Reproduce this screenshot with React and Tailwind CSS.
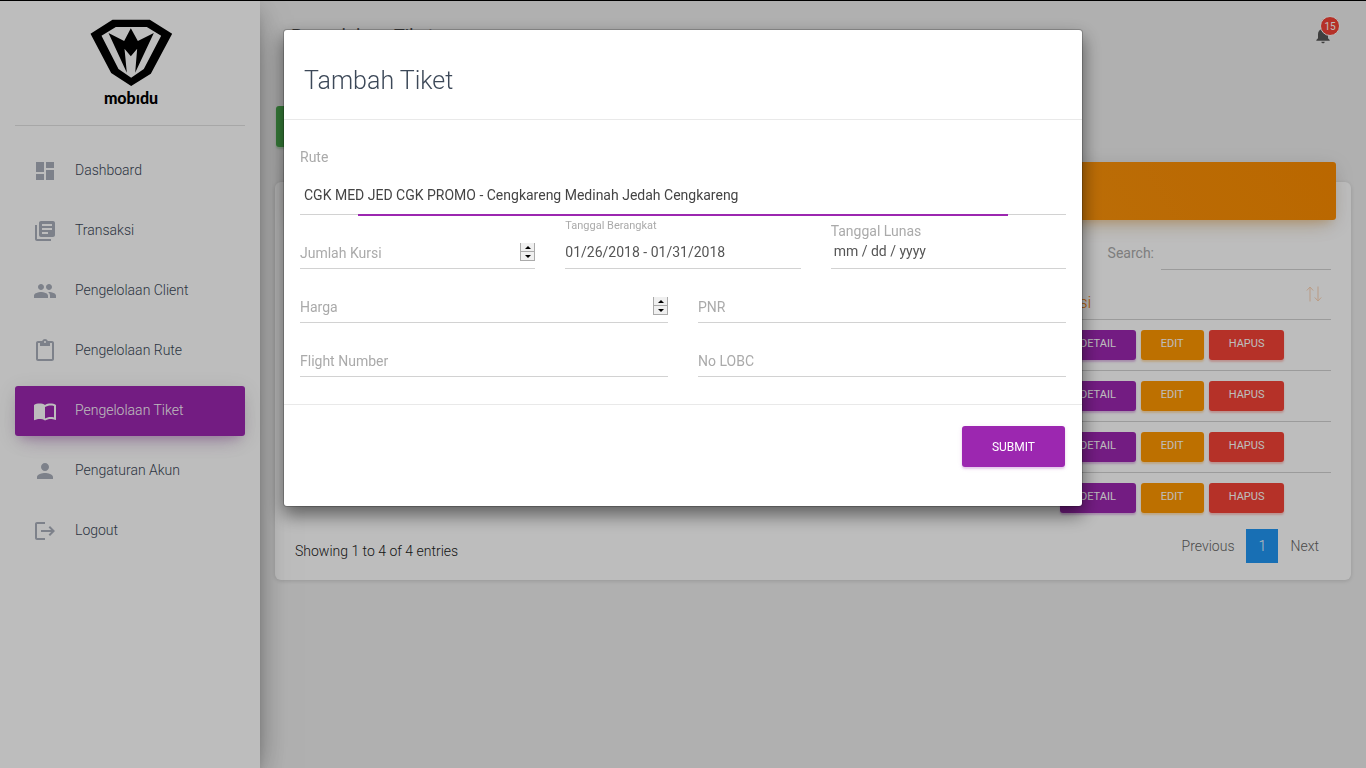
import React from "react";
import {
  MdDashboard,
  MdLibraryBooks,
  MdPeople,
  MdContentPaste,
  MdImportContacts,
  MdPerson,
  MdLogout,
  MdNotifications,
} from "react-icons/md";

const NAV = [
  { label: "Dashboard", Icon: MdDashboard },
  { label: "Transaksi", Icon: MdLibraryBooks },
  { label: "Pengelolaan Client", Icon: MdPeople },
  { label: "Pengelolaan Rute", Icon: MdContentPaste },
  { label: "Pengelolaan Tiket", Icon: MdImportContacts, active: true },
  { label: "Pengaturan Akun", Icon: MdPerson },
  { label: "Logout", Icon: MdLogout },
];

const ROWS = [1, 2, 3, 4];

function Logo() {
  return (
    <div className="flex flex-col items-center pt-[18px] pl-0.5">
      <svg viewBox="270 56 248 204" className="h-[68px] w-[83px]" aria-hidden="true">
        <path
          fillRule="evenodd"
          d="M337 58H449L516 100L452 220L393 257L333 218L271 100ZM347 80L304 106L355 206L393 232L431 206L483 106L440 80Z"
        />
        <path d="M325 98L372 122L392 84L413 122L461 98L405 217L411 145L392 168L373 145L380 217Z" />
      </svg>
      <span className="pt-px font-['Lato',sans-serif] text-base leading-5 font-black text-black">mobıdu</span>
    </div>
  );
}

function Sidebar() {
  return (
    <aside className="z-10 w-[260px] shrink-0 bg-white px-[15px] shadow-[0_16px_38px_-12px_rgba(0,0,0,0.56),0_4px_25px_0_rgba(0,0,0,0.12),0_8px_10px_-5px_rgba(0,0,0,0.2)]">
      <div className="h-[125px] border-b border-[#e2e2e2]">
        <Logo />
      </div>
      <nav className="mt-5 flex flex-col gap-[10px]">
        {NAV.map(({ label, Icon, active }) => (
          <a
            key={label}
            href="#"
            className={
              active
                ? "flex h-[50px] items-center gap-[18px] rounded-[3px] bg-[#9c27b0] px-[18px] text-sm font-light text-white shadow-[0_12px_20px_-10px_rgba(156,39,176,0.28),0_4px_20px_0_rgba(0,0,0,0.12),0_7px_8px_-5px_rgba(156,39,176,0.2)]"
                : "flex h-[50px] items-center gap-[18px] rounded-[3px] px-[18px] text-sm font-light text-[#3c4858]"
            }
          >
            <Icon className={active ? "size-6 text-white" : "size-6 text-[#a9afbb]"} />
            <span className="pb-0.5">{label}</span>
          </a>
        ))}
      </nav>
    </aside>
  );
}

function SortIcon() {
  return (
    <svg viewBox="0 0 16 16" className="size-4 fill-none stroke-[#f7852f] opacity-35" aria-hidden="true">
      <path d="M4 15.500V1.500M.8 4.500L4 1L7.200 4.500M12 .5V14.500M8.800 11.500L12 15L15.200 11.500" />
    </svg>
  );
}

const SMALL = "h-[30px] rounded-[3px] px-5 pb-0.5 text-[11px] leading-4 font-normal text-white uppercase ";

function TicketCard() {
  return (
    <section className="flow-root rounded-md bg-white px-5 pb-[17px] shadow-[0_1px_4px_0_rgba(0,0,0,0.14)]">
      <div className="-mx-[5px] -mt-5 h-[58px] rounded-[3px] bg-[linear-gradient(60deg,#ffa726,#fb8c00)] shadow-[0_12px_20px_-10px_rgba(255,152,0,0.28),0_4px_20px_0_rgba(0,0,0,0.12),0_7px_8px_-5px_rgba(255,152,0,0.2)]" />
      <div className="mt-4 flex h-[34px] items-stretch justify-end gap-[7px]">
        <label htmlFor="search" className="pt-[7px] text-sm text-[#aaa]">
          Search:
        </label>
        <input id="search" type="search" className="w-[170px] border-b border-[#d2d2d2] bg-transparent text-sm outline-none" />
      </div>
      <table className="w-full table-fixed text-left text-sm font-light">
        <thead>
          <tr className="h-[49px] border-b border-[#d2d2d2] text-[17px] text-[#f57c00]">
            <td />
            <th className="w-[276px] pt-4 pr-[9px] pb-0 pl-[5px] align-top font-light">
              <div className="flex justify-between leading-8">
                <span>Aksi</span>
                <SortIcon />
              </div>
            </th>
          </tr>
        </thead>
        <tbody>
          {ROWS.map((n) => (
            <tr key={n} className="h-[51px] border-b border-[#d2d2d2] last:border-b-0">
              <td />
              <td>
                <div className="flex gap-[5px] pl-[5px]">
                  <button type="button" className={SMALL + "bg-[#9c27b0] shadow-[0_2px_2px_0_rgba(156,39,176,0.3)]"}>
                    Detail
                  </button>
                  <button type="button" className={SMALL + "bg-[#ff9800] shadow-[0_2px_2px_0_rgba(255,152,0,0.3)]"}>
                    Edit
                  </button>
                  <button type="button" className={SMALL + "bg-[#f44336] shadow-[0_2px_2px_0_rgba(244,67,54,0.3)]"}>
                    Hapus
                  </button>
                </div>
              </td>
            </tr>
          ))}
        </tbody>
      </table>
      <div className="mt-[6px] flex items-center justify-between text-sm font-light">
        <p className="pt-[10px] text-[#222]">Showing 1 to 4 of 4 entries</p>
        <div className="flex h-[34px] items-center text-[#666]">
          <button type="button" className="px-3">Previous</button>
          <button type="button" className="h-full w-8 bg-[#2196f3] text-white">1</button>
          <button type="button" className="px-3">Next</button>
        </div>
      </div>
    </section>
  );
}

function Main() {
  return (
    <main className="min-w-0 flex-1 px-[15px]">
      <header className="flex h-[70px] items-center justify-between px-4">
        <h1 className="text-lg text-[#555]">Pengelolaan Tiket</h1>
        <button type="button" aria-label="Notifications" className="relative mr-[2px] mb-0.5 text-[#555]">
          <MdNotifications className="size-5" />
          <span className="absolute -top-[9px] left-[7px] flex size-5 items-center justify-center rounded-full border border-white bg-[#f44336] text-[10px] text-white">
            15
          </span>
        </button>
      </header>
      <div className="px-px py-[35px]">
        <button
          type="button"
          aria-label="Tambah"
          className="block h-[41px] w-[120px] rounded-[3px] bg-[#4caf50] shadow-[0_2px_2px_0_rgba(76,175,80,0.3)]"
        />
      </div>
      <TicketCard />
    </main>
  );
}

function Stepper({ name }) {
  const half = "flex h-[9px] w-[15px] items-center justify-center border-r border-b border-l border-[#aaa] bg-[#f0f0f0]";
  return (
    <span className="z-10 col-start-1 row-start-1 mb-2 flex flex-col self-end justify-self-end">
      <button type="button" aria-label={name + " +"} className={half}>
        <svg viewBox="0 0 6 3" className="h-[3px] w-[6px]"><path d="M3 0L6 3H0Z" /></svg>
      </button>
      <button type="button" aria-label={name + " -"} className={half}>
        <svg viewBox="0 0 6 3" className="h-[3px] w-[6px]"><path d="M3 3L6 0H0Z" /></svg>
      </button>
    </span>
  );
}

function Field({ id, label, stepper }) {
  return (
    <div className="grid h-[54px]">
      <label htmlFor={id} className="col-start-1 row-start-1 self-end pb-[6px] text-sm leading-5 text-[#aaa]">
        {label}
      </label>
      <input id={id} type="text" className="col-start-1 row-start-1 w-full border-b border-[#d2d2d2] bg-transparent text-sm text-[#555] outline-none" />
      {stepper && <Stepper name={label} />}
    </div>
  );
}

function Modal() {
  return (
    <div className="fixed inset-0 z-20 bg-black/26 pt-[29px]">
      <div
        role="dialog"
        aria-labelledby="modal-title"
        className="mx-auto w-full max-w-[800px] rounded border border-black/20 bg-white bg-clip-padding shadow-[0_8px_18px_rgba(0,0,0,0.5)]"
      >
        <div className="border-b border-[#e9e9e9] px-5 pt-[33px] pb-5">
          <h2 id="modal-title" className="text-[25px] leading-9 font-light text-[#3c4858]">
            Tambah Tiket
          </h2>
        </div>
        <form>
          <div className="px-4 pt-[27px] pb-[27px]">
            <label htmlFor="rute" className="block text-sm leading-5 text-[#aaa]">
              Rute
            </label>
            <div className="relative mt-[10px] border-b border-[#d2d2d2]">
              <select id="rute" className="block h-[37px] w-full appearance-none bg-transparent px-1 pb-0.5 text-sm text-[#444] outline-none">
                <option>CGK MED JED CGK PROMO - Cengkareng Medinah Jedah Cengkareng</option>
              </select>
              <span className="absolute inset-x-[58px] top-full h-0.5 bg-[#9c27b0]" />
            </div>
            <div className="grid grid-cols-3 gap-x-[30px]">
              <Field id="kursi" label="Jumlah Kursi" stepper />
              <div className="flex h-[54px] flex-col">
                <label htmlFor="berangkat" className="pt-[3px] text-[11px] leading-4 text-[#aaa]">
                  Tanggal Berangkat
                </label>
                <input
                  id="berangkat"
                  type="text"
                  defaultValue="01/26/2018 - 01/31/2018"
                  className="w-full min-w-0 flex-1 border-b border-[#d2d2d2] bg-transparent pt-0.5 text-sm text-[#555] outline-none"
                />
              </div>
              <div className="flex h-[54px] flex-col">
                <label htmlFor="lunas" className="pt-[6px] text-sm leading-5 text-[#aaa]">
                  Tanggal Lunas
                </label>
                <input
                  id="lunas"
                  type="text"
                  placeholder="mm / dd / yyyy"
                  className="w-full min-w-0 flex-1 border-b border-[#d2d2d2] bg-transparent px-[3px] pb-[7px] text-sm text-[#555] outline-none placeholder:text-[#555]"
                />
              </div>
            </div>
            <div className="grid grid-cols-2 gap-x-[30px]">
              <Field id="harga" label="Harga" stepper />
              <Field id="pnr" label="PNR" />
              <Field id="flight" label="Flight Number" />
              <Field id="lobc" label="No LOBC" />
            </div>
          </div>
          <div className="flex justify-end border-t border-[#e9e9e9] px-[17px] pt-[21px] pb-[39px]">
            <button
              type="submit"
              className="h-[41px] rounded-[3px] bg-[#9c27b0] px-[30px] text-xs text-white uppercase shadow-[0_2px_2px_0_rgba(156,39,176,0.2),0_1px_5px_0_rgba(156,39,176,0.12)]"
            >
              Submit
            </button>
          </div>
        </form>
      </div>
    </div>
  );
}

export default function App() {
  return (
    <div className="flex min-h-screen border-t border-black bg-[#eee] font-['Roboto',sans-serif]">
      <Sidebar />
      <Main />
      <Modal />
    </div>
  );
}
